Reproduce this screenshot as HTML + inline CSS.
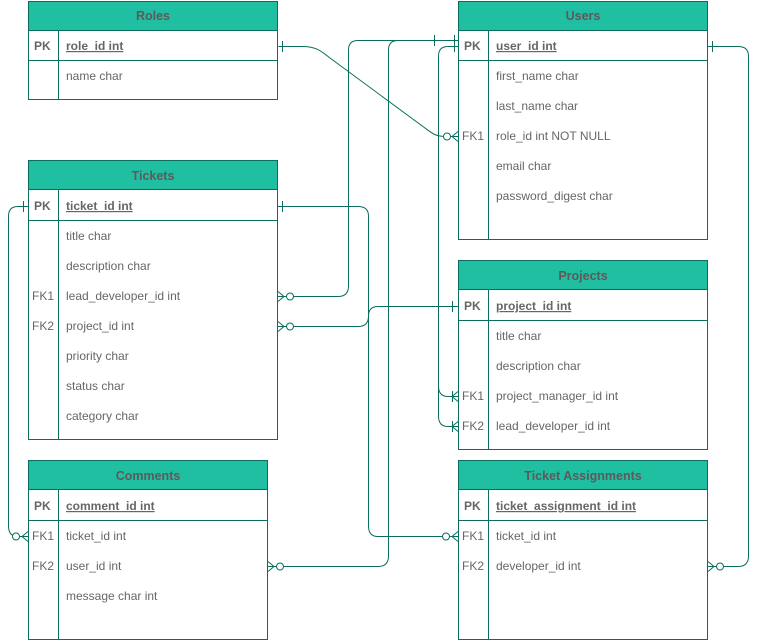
<!DOCTYPE html>
<html><head><meta charset="utf-8"><style>
html,body{margin:0;padding:0;background:#fff;width:768px;height:641px;overflow:hidden}
svg{display:block}
text{font-family:"Liberation Sans",Arial,sans-serif;font-size:12px;fill:#666}
.h{font-size:12.5px;font-weight:bold;fill:#5b5b5b}
.b{font-weight:bold;text-decoration:underline}
.k{font-weight:bold}
</style></head><body>
<svg width="768" height="641" viewBox="0 0 768 641">
<g fill="none" stroke="#0b6e5c" stroke-width="1">
<path d="M278.5 46.5 H300 C315 46 320 50 330 58 L425 128 C433 134 436 136.5 446 136.5 H458"/>
<path d="M458 40.5 H358 Q348.5 40.5 348.5 50 V286 Q348.5 296.5 338 296.5 H278"/>
<path d="M458 40.5 H398 Q388.5 40.5 388.5 50 V556 Q388.5 566.5 378 566.5 H268"/>
<path d="M458 46.5 H448 Q438.5 46.5 438.5 56 V386 Q438.5 396.5 448 396.5 H458"/>
<path d="M438.5 380 V416 Q438.5 426.5 448 426.5 H458"/>
<path d="M278 206.5 H358 Q368.5 206.5 368.5 216 V526 Q368.5 536.5 378 536.5 H458"/>
<path d="M28 206.5 H18 Q8.5 206.5 8.5 216 V526 Q8.5 536.5 18 536.5 H28"/>
<path d="M278 326.5 H358 Q368.5 326.5 368.5 316 Q368.5 306.5 378 306.5 H458"/>
<path d="M708 46.5 H738 Q748.5 46.5 748.5 56 V556 Q748.5 566.5 738 566.5 H708"/>
<path d="M282.5 41 V52 M434.5 35 V46 M454.5 35 V46 M454.5 41 V52 M712.5 41 V52 M282.5 201 V212 M23.5 201 V212 M452.5 301 V312 M452.5 391 V402 M452.5 421 V432"/>
<path d="M452 136.5 L458 131.5 M452 136.5 L458 141.5"/>
<circle cx="447" cy="136.5" r="3.5" fill="#fff"/>
<path d="M284 296.5 L278 291.5 M284 296.5 L278 301.5"/><circle cx="290" cy="296.5" r="3.5" fill="#fff"/>
<path d="M284 326.5 L278 321.5 M284 326.5 L278 331.5"/><circle cx="290" cy="326.5" r="3.5" fill="#fff"/>
<path d="M274 566.5 L268 561.5 M274 566.5 L268 571.5"/><circle cx="280" cy="566.5" r="3.5" fill="#fff"/>
<path d="M714 566.5 L708 561.5 M714 566.5 L708 571.5"/><circle cx="720" cy="566.5" r="3.5" fill="#fff"/>
<path d="M22 536.5 L28 531.5 M22 536.5 L28 541.5"/><circle cx="16" cy="536.5" r="3.5" fill="#fff"/>
<path d="M452 536.5 L458 531.5 M452 536.5 L458 541.5"/><circle cx="446" cy="536.5" r="3.5" fill="#fff"/>
<path d="M452 396.5 L458 391.5 M452 396.5 L458 401.5 M452 426.5 L458 421.5 M452 426.5 L458 431.5"/>
</g>
<g stroke="#0b6e5c" stroke-width="1">
<rect x="28.5" y="1.5" width="249" height="29" fill="#21bfa2"/>
<rect x="28.5" y="30.5" width="249" height="69" fill="#fff"/>
<path d="M28 60.5 H278 M58.5 31 V100"/>
<rect x="458.5" y="1.5" width="249" height="29" fill="#21bfa2"/>
<rect x="458.5" y="30.5" width="249" height="209" fill="#fff"/>
<path d="M458 60.5 H708 M488.5 31 V240"/>
<rect x="28.5" y="160.5" width="249" height="29" fill="#21bfa2"/>
<rect x="28.5" y="189.5" width="249" height="250" fill="#fff"/>
<path d="M28 220.5 H278 M58.5 190 V440"/>
<rect x="458.5" y="260.5" width="249" height="29" fill="#21bfa2"/>
<rect x="458.5" y="289.5" width="249" height="160" fill="#fff"/>
<path d="M458 320.5 H708 M488.5 290 V450"/>
<rect x="28.5" y="460.5" width="239" height="29" fill="#21bfa2"/>
<rect x="28.5" y="489.5" width="239" height="150" fill="#fff"/>
<path d="M28 520.5 H268 M58.5 490 V640"/>
<rect x="458.5" y="460.5" width="249" height="29" fill="#21bfa2"/>
<rect x="458.5" y="489.5" width="249" height="150" fill="#fff"/>
<path d="M458 520.5 H708 M488.5 490 V640"/>
</g>
<g>
<text class="h" x="153" y="20" text-anchor="middle">Roles</text>
<text class="k" x="34" y="50">PK</text><text class="b" x="66" y="50">role_id int</text>
<text x="66" y="80">name char</text>
<text class="h" x="583" y="20" text-anchor="middle">Users</text>
<text class="k" x="464" y="50">PK</text><text class="b" x="496" y="50">user_id int</text>
<text x="496" y="80">first_name char</text>
<text x="496" y="110">last_name char</text>
<text x="462" y="140">FK1</text><text x="496" y="140">role_id int NOT NULL</text>
<text x="496" y="170">email char</text>
<text x="496" y="200">password_digest char</text>
<text class="h" x="153" y="180" text-anchor="middle">Tickets</text>
<text class="k" x="34" y="210">PK</text><text class="b" x="66" y="210">ticket_id int</text>
<text x="66" y="240">title char</text>
<text x="66" y="270">description char</text>
<text x="32" y="300">FK1</text><text x="66" y="300">lead_developer_id int</text>
<text x="32" y="330">FK2</text><text x="66" y="330">project_id int</text>
<text x="66" y="360">priority char</text>
<text x="66" y="390">status char</text>
<text x="66" y="420">category char</text>
<text class="h" x="583" y="280" text-anchor="middle">Projects</text>
<text class="k" x="464" y="310">PK</text><text class="b" x="496" y="310">project_id int</text>
<text x="496" y="340">title char</text>
<text x="496" y="370">description char</text>
<text x="462" y="400">FK1</text><text x="496" y="400">project_manager_id int</text>
<text x="462" y="430">FK2</text><text x="496" y="430">lead_developer_id int</text>
<text class="h" x="148" y="480" text-anchor="middle">Comments</text>
<text class="k" x="34" y="510">PK</text><text class="b" x="66" y="510">comment_id int</text>
<text x="32" y="540">FK1</text><text x="66" y="540">ticket_id int</text>
<text x="32" y="570">FK2</text><text x="66" y="570">user_id int</text>
<text x="66" y="600">message char int</text>
<text class="h" x="583" y="480" text-anchor="middle">Ticket Assignments</text>
<text class="k" x="464" y="510">PK</text><text class="b" x="496" y="510">ticket_assignment_id int</text>
<text x="462" y="540">FK1</text><text x="496" y="540">ticket_id int</text>
<text x="462" y="570">FK2</text><text x="496" y="570">developer_id int</text>
</g>
</svg>
</body></html>
